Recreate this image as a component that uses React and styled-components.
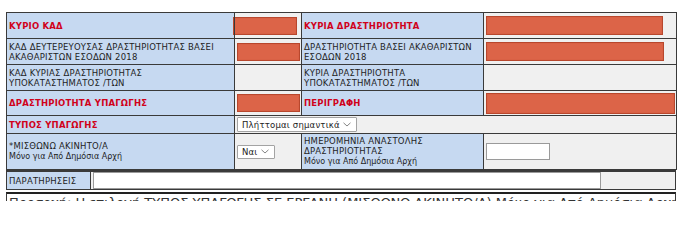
import React from 'react';
import styled, { createGlobalStyle } from 'styled-components';

const GlobalStyle = createGlobalStyle`
  html, body {
    margin: 0;
    background: #fff;
    font-family: "DejaVu Sans", Verdana, sans-serif;
  }
`

const Page = styled.div`
  padding: 12px 9px 0 6px;
  width: 670px;
  height: 189px;
  overflow: hidden;
`

const Grid = styled.table`
  width: 670px;
  border-collapse: collapse;
  table-layout: fixed;
  border: 1px solid #3a3a3a;
`

const Row = styled.tr`
  height: ${props => props.$h}px;
`

const Label = styled.td`
  background: #c6d9f1;
  border: 1px solid #3a3a3a;
  padding: 0 2px;
  font-size: 8.5px;
  line-height: 10px;
  color: ${props => props.$red ? '#d0021b' : '#1e1e1e'};
  font-weight: ${props => props.$red ? 'bold' : 'normal'};
  letter-spacing: 0.2px;
  vertical-align: middle;
  white-space: nowrap;
`

const Small = styled.span`
  display: block;
  font-size: 8px;
  line-height: 11px;
  letter-spacing: 0;
`

const Cell = styled.td`
  background: #f0f0f0;
  border: 1px solid #3a3a3a;
  padding: 0 2px;
  vertical-align: middle;
  line-height: 0;
`

const Field = styled.div`
  width: ${props => props.$w}px;
  height: ${props => props.$h}px;
  margin-left: ${props => props.$x || 0}px;
  box-sizing: border-box;
  background: #dc6448;
  border: 1px solid #b8472d;
  box-shadow: inset 0 0 1px #c04d33;
`

const TextBox = styled.div`
  width: ${props => props.$w}px;
  height: ${props => props.$h}px;
  box-sizing: border-box;
  background: #fff;
  border: 1px solid #9a9a9a;
`

const Select = styled.div`
  display: flex;
  align-items: center;
  justify-content: space-between;
  box-sizing: border-box;
  width: ${props => props.$w}px;
  height: ${props => props.$h}px;
  padding: 0 5px 0 4px;
  background: #fff;
  border: 1px solid #a3a3a3;
  border-radius: 1px;
  font-size: 8.5px;
  line-height: 10px;
  color: #222;
  letter-spacing: 0.2px;
  white-space: nowrap;
`

const Chevron = () => (
  <svg width="8" height="5" viewBox="0 0 8 5">
    <polyline points="0.5,0.8 4,4 7.5,0.8" fill="none" stroke="#777" strokeWidth="0.9" />
  </svg>
)

const NotesGrid = styled(Grid)`
  border-top: 2px solid #3a3a3a;
`

const Note = styled.div`
  margin-top: 2px;
  border-top: 2px solid #222;
  border-left: 1px solid #3a3a3a;
  border-right: 1px solid #3a3a3a;
  padding: 1px 2px 0;
  font-size: 13px;
  line-height: 16px;
  color: #333;
  white-space: nowrap;
  overflow: hidden;
`

export default function App() {
  return (
    <>
      <GlobalStyle />
      <Page>
        <Grid>
          <colgroup>
            <col style={{ width: 228 }} />
            <col style={{ width: 67 }} />
            <col style={{ width: 182 }} />
            <col style={{ width: 193 }} />
          </colgroup>
          <tbody>
            <Row $h={26}>
              <Label $red>ΚΥΡΙΟ ΚΑΔ</Label>
              <Cell><Field $w={64} $h={18} $x={-4} /></Cell>
              <Label $red>ΚΥΡΙΑ ΔΡΑΣΤΗΡΙΟΤΗΤΑ</Label>
              <Cell><Field $w={177} $h={19} /></Cell>
            </Row>
            <Row $h={26}>
              <Label>ΚΑΔ ΔΕΥΤΕΡΕΥΟΥΣΑΣ ΔΡΑΣΤΗΡΙΟΤΗΤΑΣ ΒΑΣΕΙ<br />ΑΚΑΘΑΡΙΣΤΩΝ ΕΣΟΔΩΝ 2018</Label>
              <Cell><Field $w={63} $h={18} /></Cell>
              <Label>ΔΡΑΣΤΗΡΙΟΤΗΤΑ ΒΑΣΕΙ ΑΚΑΘΑΡΙΣΤΩΝ<br />ΕΣΟΔΩΝ 2018</Label>
              <Cell><Field $w={178} $h={19} /></Cell>
            </Row>
            <Row $h={26}>
              <Label>ΚΑΔ ΚΥΡΙΑΣ ΔΡΑΣΤΗΡΙΟΤΗΤΑΣ<br />ΥΠΟΚΑΤΑΣΤΗΜΑΤΟΣ /ΤΩΝ</Label>
              <Cell />
              <Label>ΚΥΡΙΑ ΔΡΑΣΤΗΡΙΟΤΗΤΑ<br />ΥΠΟΚΑΤΑΣΤΗΜΑΤΟΣ /ΤΩΝ</Label>
              <Cell />
            </Row>
            <Row $h={25}>
              <Label $red>ΔΡΑΣΤΗΡΙΟΤΗΤΑ ΥΠΑΓΩΓΗΣ</Label>
              <Cell><Field $w={63} $h={18} /></Cell>
              <Label $red>ΠΕΡΙΓΡΑΦΗ</Label>
              <Cell><Field $w={189} $h={21} /></Cell>
            </Row>
            <Row $h={18}>
              <Label $red>ΤΥΠΟΣ ΥΠΑΓΩΓΗΣ</Label>
              <Cell colSpan={3}>
                <Select $w={120} $h={15}>Πλήττομαι σημαντικά <Chevron /></Select>
              </Cell>
            </Row>
            <Row $h={36}>
              <Label>*ΜΙΣΘΩΝΩ ΑΚΙΝΗΤΟ/Α<Small>Μόνο για Από Δημόσια Αρχή</Small></Label>
              <Cell><Select $w={38} $h={14}>Ναι <Chevron /></Select></Cell>
              <Label>ΗΜΕΡΟΜΗΝΙΑ ΑΝΑΣΤΟΛΗΣ<br />ΔΡΑΣΤΗΡΙΟΤΗΤΑΣ<Small>Μόνο για Από Δημόσια Αρχή</Small></Label>
              <Cell><TextBox $w={64} $h={17} /></Cell>
            </Row>
          </tbody>
        </Grid>
        <NotesGrid>
          <colgroup>
            <col style={{ width: 84 }} />
            <col />
          </colgroup>
          <tbody>
            <Row $h={18}>
              <Label>ΠΑΡΑΤΗΡΗΣΕΙΣ</Label>
              <Cell><TextBox $w={508} $h={17} /></Cell>
            </Row>
          </tbody>
        </NotesGrid>
        <Note>Προσοχή: Η επιλογή ΤΥΠΟΣ ΥΠΑΓΩΓΗΣ ΣΕ ΕΡΓΑΝΗ (ΜΙΣΘΩΝΩ ΑΚΙΝΗΤΟ/Α) Μόνο για Από Δημόσια Αρχή</Note>
      </Page>
    </>
  );
}
